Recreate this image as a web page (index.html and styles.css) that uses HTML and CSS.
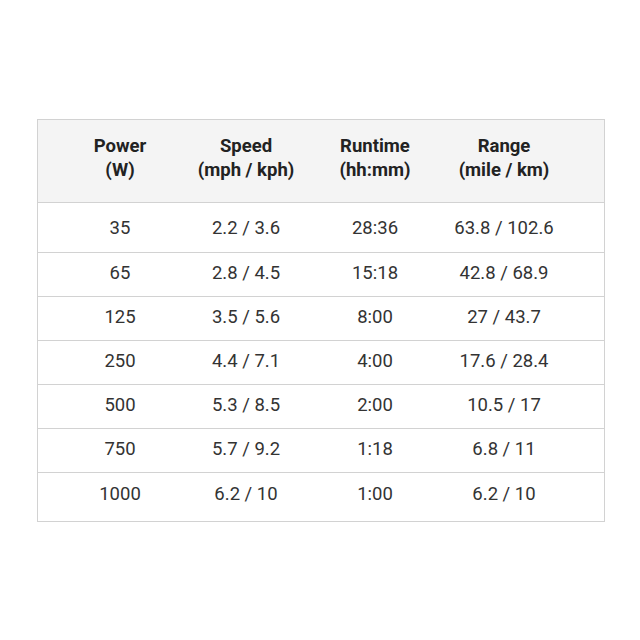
FILE: index.html
```html
<!DOCTYPE html>
<html lang="en">
<head>
<meta charset="utf-8">
<title>Power table</title>
<link rel="stylesheet" href="styles.css">
</head>
<body>
<div class="spec-table">
  <div class="row head">
    <div class="cell">Power<br>(W)</div>
    <div class="cell">Speed<br>(mph / kph)</div>
    <div class="cell">Runtime<br>(hh:mm)</div>
    <div class="cell">Range<br>(mile / km)</div>
  </div>
  <div class="row first">
    <div class="cell">35</div><div class="cell">2.2 / 3.6</div><div class="cell">28:36</div><div class="cell">63.8 / 102.6</div>
  </div>
  <div class="row">
    <div class="cell">65</div><div class="cell">2.8 / 4.5</div><div class="cell">15:18</div><div class="cell">42.8 / 68.9</div>
  </div>
  <div class="row">
    <div class="cell">125</div><div class="cell">3.5 / 5.6</div><div class="cell">8:00</div><div class="cell">27 / 43.7</div>
  </div>
  <div class="row">
    <div class="cell">250</div><div class="cell">4.4 / 7.1</div><div class="cell">4:00</div><div class="cell">17.6 / 28.4</div>
  </div>
  <div class="row">
    <div class="cell">500</div><div class="cell">5.3 / 8.5</div><div class="cell">2:00</div><div class="cell">10.5 / 17</div>
  </div>
  <div class="row">
    <div class="cell">750</div><div class="cell">5.7 / 9.2</div><div class="cell">1:18</div><div class="cell">6.8 / 11</div>
  </div>
  <div class="row last">
    <div class="cell">1000</div><div class="cell">6.2 / 10</div><div class="cell">1:00</div><div class="cell">6.2 / 10</div>
  </div>
</div>
</body>
</html>
```
FILE: styles.css
```css
html, body {
  background: #ffffff;
}
body {
  margin: 0;
  padding: 119px 0 0 37px;
  font-family: Roboto, "Liberation Sans", sans-serif;
  font-size: 18.5px;
  line-height: 24px;
  color: #333333;
}
.spec-table {
  width: 566px;
  border: 1px solid #d2d2d2;
  background: #ffffff;
}
.row {
  display: grid;
  grid-template-columns: 126px 126px 132px 126px;
  padding: 8px 37px 11px 19px;
  border-bottom: 1px solid #d2d2d2;
}
.cell {
  text-align: center;
  white-space: nowrap;
}
.head {
  background: #f4f4f4;
  padding-top: 14px;
  padding-bottom: 20px;
  font-weight: 700;
  color: #222222;
}
.first {
  padding-top: 13px;
  padding-bottom: 12px;
}
.last {
  padding-top: 9px;
  padding-bottom: 15px;
  border-bottom: none;
}
```
